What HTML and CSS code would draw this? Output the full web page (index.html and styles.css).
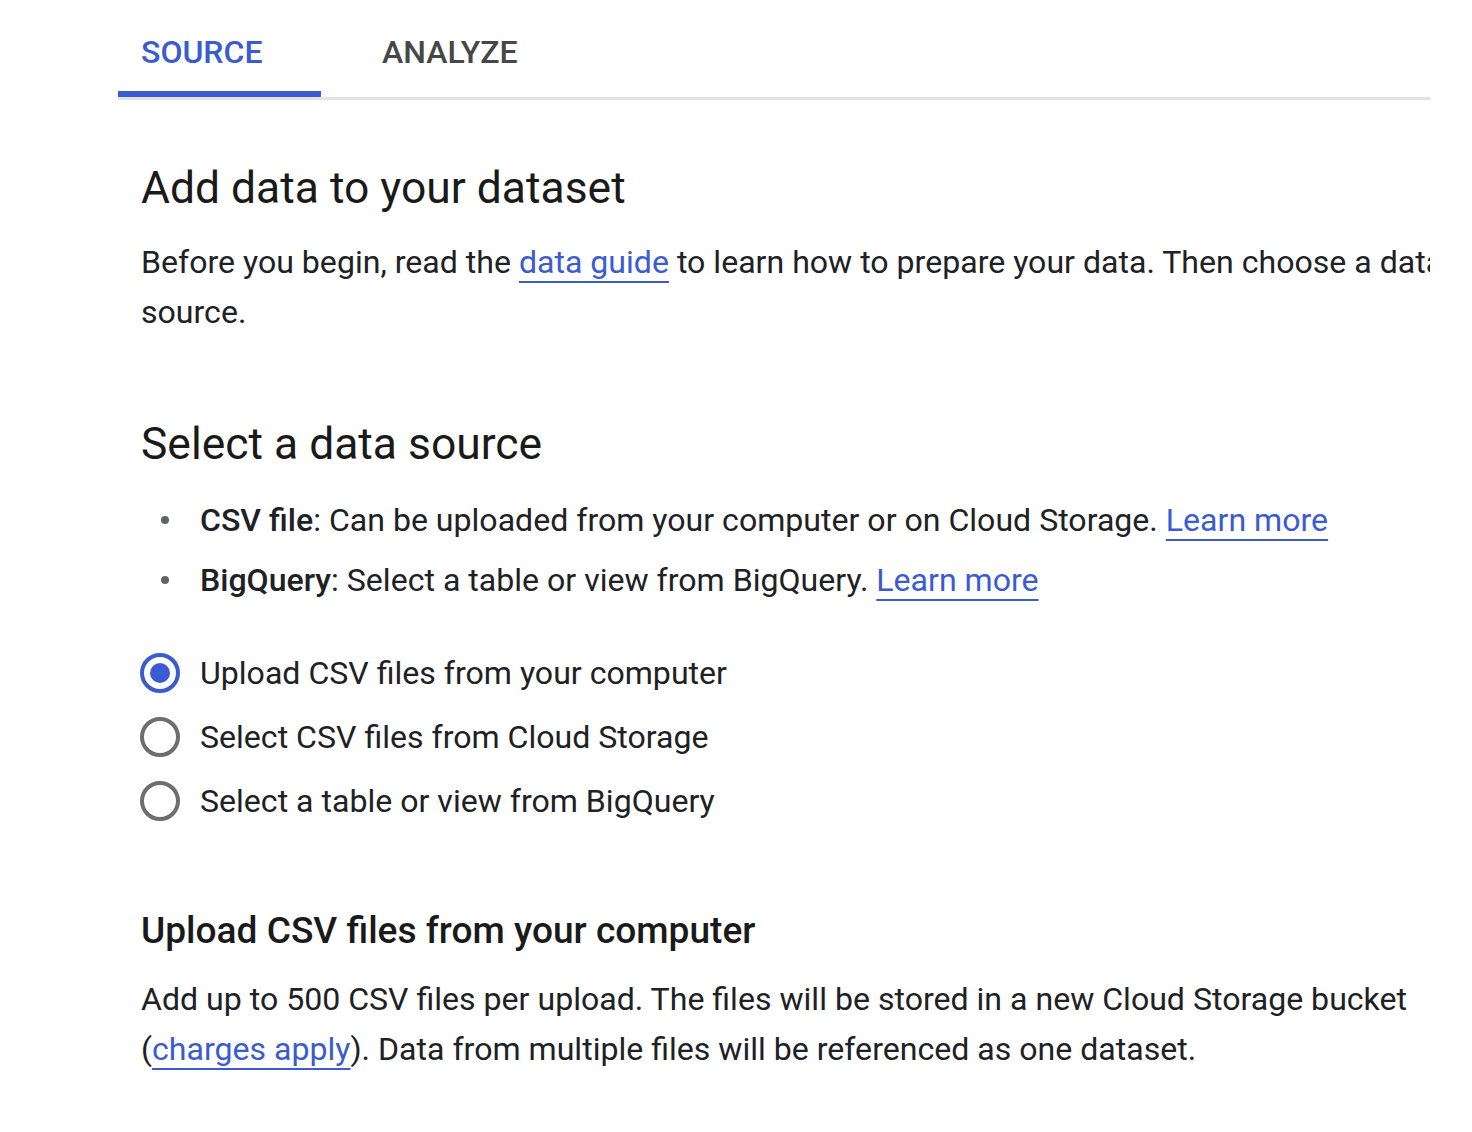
FILE: index.html
```html
<!DOCTYPE html>
<html lang="en">
<head>
<meta charset="utf-8">
<title>Add data to your dataset</title>
<link rel="stylesheet" href="styles.css">
</head>
<body>
<div class="frame">
  <div class="tabs">
    <div class="tab tab-active">SOURCE</div>
    <div class="tab tab-second">ANALYZE</div>
  </div>
  <div class="content">
    <h1 class="title">Add data to your dataset</h1>
    <p class="para">Before you begin, read the <a class="link" href="#">data guide</a> to learn how to prepare your data. Then choose a data source.</p>

    <h2 class="title title-section">Select a data source</h2>
    <ul class="bullets">
      <li><b class="strong">CSV file</b>: Can be uploaded from your computer or on Cloud Storage. <a class="link" href="#">Learn more</a></li>
      <li><b class="strong">BigQuery</b>: Select a table or view from BigQuery. <a class="link" href="#">Learn more</a></li>
    </ul>

    <div class="radios">
      <label class="radio-row"><span class="radio radio-on"><span class="radio-dot"></span></span><span class="radio-label">Upload CSV files from your computer</span></label>
      <label class="radio-row"><span class="radio"></span><span class="radio-label">Select CSV files from Cloud Storage</span></label>
      <label class="radio-row"><span class="radio"></span><span class="radio-label">Select a table or view from BigQuery</span></label>
    </div>

    <h3 class="subtitle">Upload CSV files from your computer</h3>
    <p class="para para-last">Add up to 500 CSV files per upload. The files will be stored in a new Cloud Storage bucket (<a class="link" href="#">charges apply</a>). Data from multiple files will be referenced as one dataset.</p>
  </div>
</div>
</body>
</html>
```
FILE: styles.css
```css
html, body {
  margin: 0;
  padding: 0;
  background: #ffffff;
}
body {
  font-family: Roboto, "Liberation Sans", Arial, sans-serif;
  color: #202124;
}
.frame {
  margin-left: 118px;
  width: 1312px;
  overflow: hidden;
}
.tabs {
  display: flex;
  border-bottom: 3px solid #e3e3e3;
}
.tab {
  box-sizing: border-box;
  height: 97px;
  padding-top: 32px;
  font-size: 32px;
  line-height: 40px;
  font-weight: 500;
  color: #474747;
}
.tab-active {
  width: 203px;
  padding-left: 23px;
  color: #3b5bd0;
  border-bottom: 6px solid #3b5bd0;
}
.tab-second {
  padding-left: 61px;
}
.content {
  width: 1340px;
  padding-left: 23px;
}
.title {
  margin: 62px 0 0 0;
  font-size: 44.4px;
  line-height: 52px;
  font-weight: 400;
  color: #1a1a1a;
}
.title-section {
  margin-top: 81px;
}
.para {
  margin: 23px 0 0 0;
  font-size: 32.1px;
  line-height: 50px;
  color: #202124;
}
.link {
  color: #3b5bd0;
  text-decoration: underline;
  text-decoration-thickness: 2px;
  text-underline-offset: 8px;
}
.bullets {
  margin: 20px 0 0 0;
  padding: 0;
  list-style: none;
}
.bullets li {
  display: flex;
  align-items: center;
  font-size: 32.1px;
  line-height: 60px;
  white-space: pre;
}
.bullets li::before {
  content: "";
  width: 8px;
  height: 8px;
  border-radius: 50%;
  background: #5f6368;
  margin-left: 20px;
  margin-right: 31px;
  flex: none;
}
.strong {
  font-weight: 500;
}
.radios {
  margin-top: 31px;
  display: flex;
  flex-direction: column;
}
.radio-row {
  display: flex;
  align-items: center;
  height: 64px;
}
.radio {
  box-sizing: border-box;
  width: 40px;
  height: 40px;
  border: 4px solid #6e6e6e;
  border-radius: 50%;
  display: flex;
  align-items: center;
  justify-content: center;
  flex: none;
  margin-left: -1px;
  margin-right: 20px;
}
.radio-on {
  border-color: #3b5bd0;
}
.radio-dot {
  width: 20px;
  height: 20px;
  border-radius: 50%;
  background: #3b5bd0;
}
.radio-label {
  font-size: 32.1px;
  line-height: 64px;
  color: #202124;
}
.subtitle {
  margin: 76px 0 0 0;
  font-size: 37.1px;
  line-height: 44px;
  font-weight: 500;
  color: #1a1a1a;
}
.para-last {
  margin-top: 21px;
  margin-bottom: 60px;
}
```
